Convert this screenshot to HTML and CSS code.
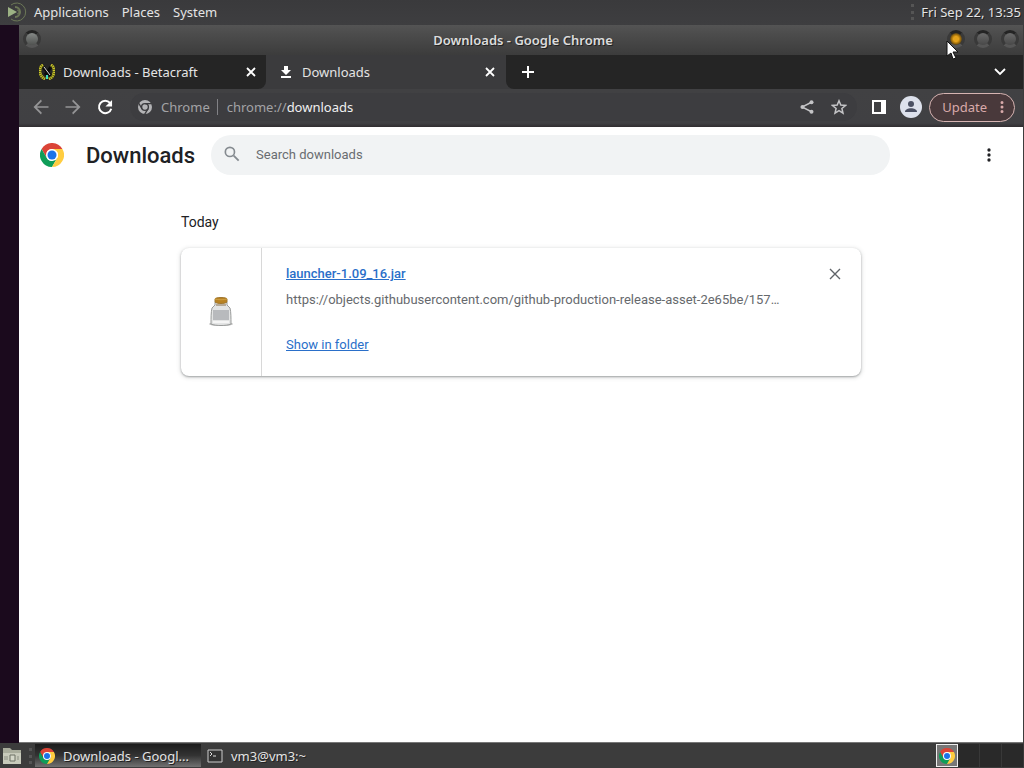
FILE: index.html
```html
<!DOCTYPE html>
<html lang="en">
<head>
    <meta charset="UTF-8">
    <meta name="viewport" content="width=device-width, initial-scale=1.0">
    <title>Downloads - Google Chrome</title>
    <link rel="stylesheet" href="styles.css">
</head>
<body>
    <svg class="defs" aria-hidden="true">
        <symbol id="chrome" viewBox="0 0 48 48">
            <path fill="#db4437" d="M3.2 12A24 24 0 0 1 44.8 12H24A12 12 0 0 0 13.6 18L13.6 30z"/>
            <path fill="#0f9d58" d="M3.2 12L13.6 30A12 12 0 0 0 24 36L34.4 30L24 48A24 24 0 0 1 3.2 12z"/>
            <path fill="#ffcd40" d="M44.8 12A24 24 0 0 1 24 48L34.4 30A12 12 0 0 0 34.4 18L24 12z"/>
            <circle cx="24" cy="24" r="12" fill="#fff"/>
            <circle cx="24" cy="24" r="9" fill="#1a73e8"/>
        </symbol>
        <symbol id="cross" viewBox="0 0 12 12">
            <path d="M2 2l8 8M10 2l-8 8" fill="none" stroke="currentColor" stroke-width="1.8"/>
        </symbol>
        <symbol id="dots" viewBox="0 0 24 24">
            <path fill="currentColor" d="M12 8a2 2 0 1 0 0-4 2 2 0 0 0 0 4zm0 2a2 2 0 1 0 0 4 2 2 0 0 0 0-4zm0 6a2 2 0 1 0 0 4 2 2 0 0 0 0-4z"/>
        </symbol>
    </svg>

    <header class="panel top_panel">
        <svg class="menu_logo" width="20" height="20" viewBox="0 0 20 20">
            <path d="M1 5l9 5-9 5z" fill="#9cb284"/>
            <g fill="none" stroke="#6c7857">
                <path d="M4 3a9 9 0 1 1 0 14"/>
                <path d="M8 5a5 5 0 1 1 0 10" stroke-width="2"/>
                <path d="M10 8a2 2 0 0 1 0 4"/>
            </g>
        </svg>
        <nav class="menus">
            <button>Applications</button>
            <button>Places</button>
            <button>System</button>
        </nav>
        <span class="grip"></span>
        <time class="clock">Fri Sep 22, 13:35</time>
    </header>

    <main class="desktop">
        <section class="window">
            <div class="titlebar">
                <button class="knob menu_knob" aria-label="Window menu"></button>
                <h1>Downloads - Google Chrome</h1>
                <div class="knobs">
                    <button class="knob lit" aria-label="Minimize">
                        <svg class="cursor" width="14" height="20" viewBox="0 0 14 20"><path d="M1 1v15l4-3 2 6 3-1-3-6h5z" fill="#fff" stroke="#111"/></svg>
                    </button>
                    <button class="knob" aria-label="Maximize"></button>
                    <button class="knob" aria-label="Close"></button>
                </div>
            </div>

            <div class="tabs">
                <div class="tab">
                    <svg width="16" height="16" viewBox="0 0 16 16">
                        <path d="M4 1C-1 4 0 12 6 15M12 1c5 3 4 11-2 14" fill="none" stroke="#5d6113" stroke-width="3"/>
                        <path d="M4 1C-1 4 0 12 6 15M12 1c5 3 4 11-2 14" fill="none" stroke="#d0c832" stroke-width="3" stroke-dasharray="1 1"/>
                        <path d="M4 3l8 9M12 3l-6 8" stroke="#0c0c0c" stroke-width="3"/>
                        <path d="M5 3l6 8" stroke="#ddd"/>
                        <path d="M7 11h2v4H7z" fill="#3fe0c0"/>
                    </svg>
                    <span class="tab_name">Downloads - Betacraft</span>
                    <button class="tab_close" aria-label="Close tab"><svg width="12" height="12"><use href="#cross"/></svg></button>
                </div>
                <div class="tab active">
                    <svg width="16" height="16" viewBox="0 0 16 16"><path d="M6 2h4v4h3l-5 5-5-5h3zM3 12h10v2H3z" fill="#fff"/></svg>
                    <span class="tab_name">Downloads</span>
                    <button class="tab_close" aria-label="Close tab"><svg width="12" height="12"><use href="#cross"/></svg></button>
                </div>
                <div class="tab_space">
                    <button aria-label="New tab"><svg width="14" height="14" viewBox="0 0 14 14"><path d="M7 1v12M1 7h12" stroke="#fff" stroke-width="2"/></svg></button>
                    <button aria-label="Search tabs"><svg width="12" height="12" viewBox="0 0 12 12"><path d="M1 3l5 5 5-5" fill="none" stroke="#fff" stroke-width="1.8"/></svg></button>
                </div>
            </div>

            <div class="toolbar">
                <button class="tool dim" aria-label="Back"><svg width="20" height="20" viewBox="0 0 24 24"><path d="M21 11H7l6-6-1-2-9 9 9 9 1-2-6-6h14z" fill="currentColor"/></svg></button>
                <button class="tool dim" aria-label="Forward"><svg width="20" height="20" viewBox="0 0 24 24"><path d="M3 11h14l-6-6 1-2 9 9-9 9-1-2 6-6H3z" fill="currentColor"/></svg></button>
                <button class="tool" aria-label="Reload"><svg width="20" height="20" viewBox="0 0 24 24"><path d="M18 7a7.5 7.5 0 1 0 1.500 7" fill="none" stroke="currentColor" stroke-width="2.400"/><path d="M20.500 3.500v8h-8z" fill="currentColor"/></svg></button>
                <div class="omnibox">
                    <svg width="16" height="16" viewBox="0 0 16 16">
                        <circle cx="8" cy="8" r="7" fill="#b4b4b6"/>
                        <circle cx="8" cy="8" r="3.4" fill="#b4b4b6" stroke="#3c3c3f" stroke-width="1.4"/>
                        <path d="M8 4.6h7M5 9.8L1.6 4M11 9.8L7.6 15.4" stroke="#3c3c3f" stroke-width="1.3"/>
                    </svg>
                    <span class="scheme">Chrome</span>
                    <span class="address">chrome://<b>downloads</b></span>
                    <button class="tool share" aria-label="Share"><svg width="16" height="16" viewBox="0 0 16 16"><path d="M13 3L3 8l10 5" fill="none" stroke="currentColor" stroke-width="1.4"/><g fill="currentColor"><circle cx="12.5" cy="3.2" r="2"/><circle cx="3.5" cy="8" r="2"/><circle cx="12.5" cy="12.8" r="2"/></g></svg></button>
                    <button class="tool star" aria-label="Bookmark"><svg width="16" height="16" viewBox="0 0 16 16"><path d="M8 1.8l1.8 4.3 4.7.4-3.6 3 1.1 4.6L8 11.7l-4 2.4 1.1-4.6-3.6-3 4.7-.4z" fill="none" stroke="currentColor" stroke-width="1.5"/></svg></button>
                </div>
                <button class="tool" aria-label="Side panel"><svg width="16" height="16" viewBox="0 0 16 16"><path d="M1 1h14v14H1zM3 3v10h7V3z" fill="#fff" fill-rule="evenodd"/></svg></button>
                <button class="tool" aria-label="Profile"><svg width="22" height="22" viewBox="0 0 22 22"><circle cx="11" cy="11" r="11" fill="#dde1ec"/><circle cx="11" cy="8" r="3" fill="#4b5063"/><path d="M5 16c0-5 12-5 12 0z" fill="#4b5063"/></svg></button>
                <button class="update">Update <svg width="18" height="18"><use href="#dots"/></svg></button>
            </div>

            <div class="page">
                <div class="page_header">
                    <svg class="page_logo" width="24" height="24"><use href="#chrome"/></svg>
                    <h2>Downloads</h2>
                    <label class="search">
                        <svg width="20" height="20" viewBox="0 0 24 24"><circle cx="9.5" cy="9.5" r="5.5" fill="none" stroke="#858b90" stroke-width="2"/><path d="M14 14l6 6" stroke="#858b90" stroke-width="2.2"/></svg>
                        <input type="search" placeholder="Search downloads" aria-label="Search downloads">
                    </label>
                    <button class="more" aria-label="More actions"><svg width="20" height="20"><use href="#dots"/></svg></button>
                </div>
                <div class="downloads">
                    <h3>Today</h3>
                    <article class="card">
                        <div class="file_icon">
                            <svg width="24" height="30" viewBox="0 0 24 30">
                                <ellipse cx="12" cy="27" rx="12" ry="2" fill="#bbb"/>
                                <path d="M6 5h12v3l3 3c1 4 1 10 1 16-5 2-15 2-20 0 0-6 0-12 1-16l3-3z" fill="#e3e4e4" stroke="#9a9c9b"/>
                                <path d="M4 13h16v10H4z" fill="#b8babd"/>
                                <path d="M4 24h16v2H4z" fill="#f5f5f5"/>
                                <path d="M6 2c0-2 12-2 12 0v3c-2 2-10 2-12 0z" fill="#b98222" stroke="#a07832"/>
                                <path d="M6 2c3 1 9 1 12 0" fill="none" stroke="#cfa044"/>
                                <path d="M7 8h10" stroke="#8a714c"/>
                            </svg>
                        </div>
                        <div class="details">
                            <a href="#" class="file_name">launcher-1.09_16.jar</a>
                            <p class="file_url">https://objects.githubusercontent.com/github-production-release-asset-2e65be/157…</p>
                            <a href="#" class="show">Show in folder</a>
                        </div>
                        <button class="remove" aria-label="Remove from list"><svg width="12" height="12" viewBox="0 0 12 12"><path d="M1 1l10 10M11 1L1 11" stroke="#5f6368" stroke-width="1.4"/></svg></button>
                    </article>
                </div>
            </div>
        </section>
    </main>

    <footer class="panel taskbar">
        <button class="show_desktop" aria-label="Files">
            <svg width="20" height="18" viewBox="0 0 20 18"><path d="M1 1h7l2 2h9v14H1z" fill="#a9ac9c"/><path d="M1 6h18v11H1z" fill="#c8cabb"/><path d="M8 8h5v6H8z" fill="#d5d7c9" stroke="#6d7065"/><path d="M3 9v4M5 9v4M16 9v4" stroke="#8c8f83"/></svg>
        </button>
        <span class="grip"></span>
        <button class="task current"><svg width="16" height="16"><use href="#chrome"/></svg><span>Downloads - Googl...</span></button>
        <button class="task"><svg width="16" height="16" viewBox="0 0 16 16"><path d="M1 2h14v12H1z" fill="#333" stroke="#ccc"/><path d="M3 4l2 2-2 2M6 8h3" fill="none" stroke="#ddd"/></svg><span>vm3@vm3:~</span></button>
        <div class="workspaces">
            <button class="here" aria-label="Workspace 1"><svg width="16" height="16"><use href="#chrome"/></svg></button>
            <button aria-label="Workspace 2"></button>
            <button aria-label="Workspace 3"></button>
            <button aria-label="Workspace 4"></button>
        </div>
    </footer>
</body>
</html>
```
FILE: styles.css
```css
* {
    box-sizing: border-box;
}

body {
    margin: 0;
    height: 100vh;
    display: flex;
    flex-direction: column;
    overflow: hidden;
    background: #1b0a1d;
    color: #e4e4e4;
    font-family: "Noto Sans", sans-serif;
    font-size: 13px;
}

button, input {
    margin: 0;
    padding: 0;
    border: 0;
    background: none;
    color: inherit;
    font: inherit;
}

h1, h2, h3, p {
    margin: 0;
}

svg {
    display: block;
    flex-shrink: 0;
}

.defs {
    position: absolute;
    width: 0;
    height: 0;
}

/* desktop panels */
.panel {
    display: flex;
    align-items: center;
    flex-shrink: 0;
    background: #3c3c3c;
    text-shadow: 1px 1px #222;
}

.top_panel {
    height: 25px;
    padding: 0 3px 2px 7px;
    background: linear-gradient(#3a3a3c, #3e3e40);
}

.menus {
    display: flex;
    gap: 13px;
    margin-left: 7px;
    flex: 1;
}

.grip {
    width: 4px;
    height: 16px;
    border-left: 3px dotted #555;
}

.clock {
    margin-left: 6px;
}

.desktop {
    flex: 1;
    min-height: 0;
    display: flex;
    padding-left: 19px;
}

.window {
    flex: 1;
    min-width: 0;
    display: flex;
    flex-direction: column;
    border-right: 1px solid #3c3c3c;
    background: #3c3c3c;
}

/* title bar */
.titlebar {
    height: 30px;
    display: flex;
    align-items: center;
    justify-content: space-between;
    padding: 0 4px 2px;
    background: linear-gradient(#545454, #4c4c4c 30%, #3c3c3c);
}

.titlebar h1 {
    flex: 1;
    padding-left: 58px;
    padding-top: 2px;
    text-align: center;
    font-size: 13px;
    font-weight: 600;
    color: #dcdcdc;
    text-shadow: 1px 1px #222;
}

.knobs {
    display: flex;
    gap: 9px;
}

.knob {
    position: relative;
    width: 18px;
    height: 18px;
    border-radius: 50%;
    border: 3px solid #393939;
    border-top-color: #242424;
    border-bottom-color: #565656;
    background: linear-gradient(#6a6a6a, #484848);
}

.menu_knob {
    background: linear-gradient(#858987, #505250);
}

.knob.lit {
    background: radial-gradient(#e3a21b 30%, #a8740c 50%, #43371f 75%);
}

.cursor {
    position: absolute;
    left: -4px;
    top: 7px;
    z-index: 2;
}

/* tabs */
.tabs {
    height: 34px;
    display: flex;
    background: #3b3b3d;
}

.tab {
    flex: 0 1 247px;
    min-width: 0;
    display: flex;
    align-items: center;
    padding: 0 8px 0 20px;
    border-radius: 0 0 8px 0;
    background: #252525;
}

.tab.active {
    flex-basis: 240px;
    padding: 0 9px 0 12px;
    background: none;
}

.tab_name {
    flex: 1;
    margin-left: 8px;
    overflow: hidden;
    white-space: nowrap;
}

.tab_close {
    padding: 1px;
    color: #fff;
}

.tab_space {
    flex: 1;
    display: flex;
    align-items: center;
    justify-content: space-between;
    padding: 0 17px 0 15px;
    border-radius: 0 0 0 8px;
    background: #252525;
}

/* toolbar */
.toolbar {
    height: 38px;
    display: flex;
    align-items: center;
    padding: 0 8px 2px 6px;
    background: linear-gradient(#414143, #404043 90%, #302d30);
}

.tool {
    width: 32px;
    height: 32px;
    display: flex;
    align-items: center;
    justify-content: center;
    flex-shrink: 0;
    color: #fff;
}

.tool.dim {
    color: #949496;
}

.omnibox {
    flex: 1;
    height: 28px;
    display: flex;
    align-items: center;
    margin: 0 6px 0 9px;
    padding-left: 7px;
    border-radius: 14px;
    background: #3d3d40;
    color: #a3a3a6;
}

.scheme {
    margin-left: 8px;
    padding-right: 7px;
    border-right: 1px solid #828286;
    line-height: 16px;
}

.address {
    flex: 1;
    margin-left: 9px;
}

.address b {
    font-weight: 400;
    color: #f0f0f0;
}

.omnibox .tool {
    color: #c4c4c6;
}

.star {
    margin-right: 2px;
}

.update {
    height: 29px;
    display: flex;
    align-items: center;
    justify-content: space-between;
    gap: 6px;
    margin-left: 2px;
    padding: 0 3px 0 12px;
    border: 1px solid #d6b4b2;
    border-radius: 15px;
    background: #49393b;
    color: #d9aaaa;
}

/* downloads page */
.page {
    flex: 1;
    min-height: 0;
    overflow: hidden;
    border-bottom: 1px solid #777;
    background: #fff;
    color: #202124;
    font-family: Roboto, sans-serif;
}

.page_header {
    height: 56px;
    display: flex;
    align-items: center;
    padding: 0 24px 0 21px;
}

.page_header h2 {
    margin: 0 16px 0 22px;
    font-size: 22px;
    font-weight: 500;
}

.search {
    flex: 0 1 679px;
    height: 40px;
    display: flex;
    align-items: center;
    padding: 0 12px 2px 11px;
    border-radius: 20px;
    background: #f1f3f4;
}

.search input {
    flex: 1;
    min-width: 0;
    margin-left: 14px;
    outline: 0;
}

.search input::placeholder {
    color: #696d71;
    opacity: 1;
}

.more {
    margin-left: auto;
}

.downloads {
    max-width: 680px;
    margin: 0 auto;
    padding-top: 28px;
}

.downloads h3 {
    font-size: 14px;
    font-weight: 400;
    line-height: 22px;
}

.card {
    display: flex;
    align-items: flex-start;
    margin-top: 15px;
    border-radius: 8px;
    box-shadow: 0 1px 2px rgba(60, 64, 67, 0.4), 0 1px 4px 1px rgba(60, 64, 67, 0.15);
}

.file_icon {
    width: 81px;
    align-self: stretch;
    display: flex;
    align-items: center;
    justify-content: center;
    border-right: 1px solid #d8d8d8;
}

.details {
    flex: 1;
    min-width: 0;
    padding: 16px 0 21px 24px;
    line-height: 20px;
}

.details a {
    color: #2a6fc9;
}

.file_name {
    font-weight: 500;
}

.file_url {
    margin: 6px 0 25px;
    overflow: hidden;
    white-space: nowrap;
    text-overflow: ellipsis;
    color: #66696d;
}

.remove {
    padding: 20px;
}

/* taskbar */
.taskbar {
    height: 25px;
}

.show_desktop {
    margin: 0 7px 0 2px;
}

.task {
    width: 166px;
    height: 23px;
    display: flex;
    align-items: center;
    gap: 8px;
    padding: 0 4px;
    white-space: nowrap;
    text-shadow: inherit;
}

.task.current {
    margin: 0 2px;
    background: linear-gradient(#1c1c1c, #333 50%, #717171);
}

.workspaces {
    display: flex;
    margin-left: auto;
}

.workspaces button {
    width: 22px;
    height: 23px;
    border-right: 1px solid #383838;
    background: #292929;
}

.workspaces .here {
    display: flex;
    align-items: center;
    justify-content: center;
    border: 1px solid #eee;
    background: #777;
}
```
